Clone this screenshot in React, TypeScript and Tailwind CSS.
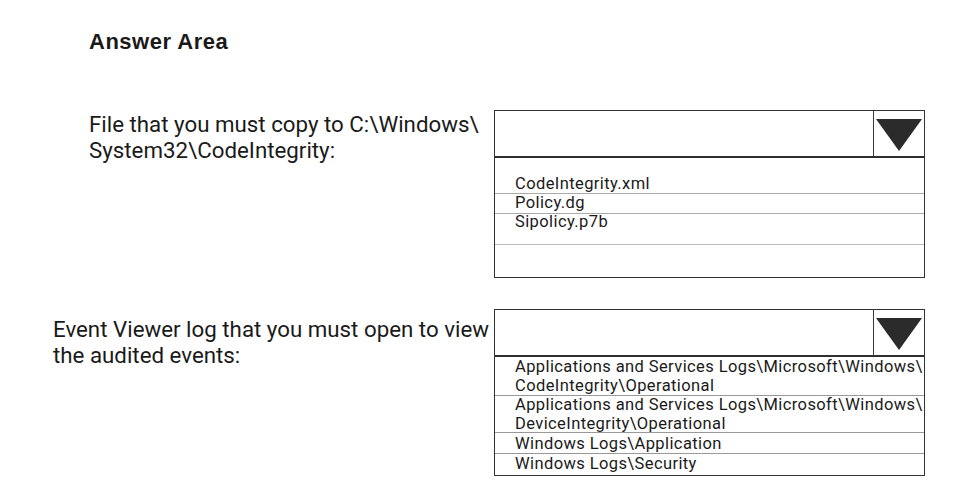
import React from "react";

const Arrow = () => (
  <svg width="46" height="32" viewBox="0 0 46 32">
    <polygon points="0,0 46,0 23,32" fill="#2b2b2b" />
  </svg>
);

const SelectHeader = () => (
  <div className="flex h-[47px] border-b-2 border-[#2f2f2f]">
    <div className="flex-1" />
    <div className="w-[51px] border-l-[1.5px] border-[#3a3a3a] flex items-start justify-center pt-[8px]">
      <Arrow />
    </div>
  </div>
);

const App = () => {
  return (
    <div className="w-[956px] h-[496px] bg-white text-[#1a1a1a] overflow-hidden font-['Roboto','Liberation_Sans',sans-serif]">
      <div className="pt-[30px] pl-[89px]">
        <h1 className="text-[22px] leading-[24px] font-bold tracking-[0.5px] font-['Liberation_Sans',Arial,sans-serif]">
          Answer Area
        </h1>
      </div>

      {/* File row */}
      <div className="flex items-start mt-[56px]">
        <div className="w-[494px] pl-[89px] mt-[1px] text-[22.3px] leading-[26px]">
          File that you must copy to C:\Windows\
          <br />
          System32\CodeIntegrity:
        </div>
        <div className="w-[431px] h-[168px] border-[1.5px] border-[#333] flex flex-col">
          <SelectHeader />
          <div className="flex flex-col flex-1 text-[16.5px] tracking-[0.4px]">
            <div className="h-[36px] flex items-end pl-[20px] leading-[19px] border-b border-[#aaa]">
              CodeIntegrity.xml
            </div>
            <div className="h-[20px] flex items-start pl-[20px] leading-[17px] border-b border-[#aaa]">
              Policy.dg
            </div>
            <div className="h-[31px] flex items-start pl-[20px] leading-[16px] border-b border-[#bbb]">
              Sipolicy.p7b
            </div>
            <div className="flex-1" />
          </div>
        </div>
      </div>

      {/* Event log row */}
      <div className="flex items-start mt-[31px]">
        <div className="w-[494px] pl-[53px] mt-[7px] text-[22.3px] leading-[26px]">
          Event Viewer log that you must open to view
          <br />
          the audited events:
        </div>
        <div className="w-[431px] h-[167px] border-[1.5px] border-[#333] flex flex-col">
          <SelectHeader />
          <div className="flex flex-col flex-1 text-[16.5px] tracking-[0.4px]">
            <div className="h-[39px] pl-[20px] leading-[19px] border-b border-[#999] whitespace-nowrap">
              Applications and Services Logs\Microsoft\Windows\
              <br />
              CodeIntegrity\Operational
            </div>
            <div className="h-[37px] pl-[20px] leading-[18.5px] border-b border-[#999] whitespace-nowrap">
              Applications and Services Logs\Microsoft\Windows\
              <br />
              DeviceIntegrity\Operational
            </div>
            <div className="h-[21px] pl-[20px] pt-[1px] leading-[19px] border-b border-[#999]">
              Windows Logs\Application
            </div>
            <div className="flex-1 pl-[20px] leading-[19px]">Windows Logs\Security</div>
          </div>
        </div>
      </div>
    </div>
  );
};

export default App;
